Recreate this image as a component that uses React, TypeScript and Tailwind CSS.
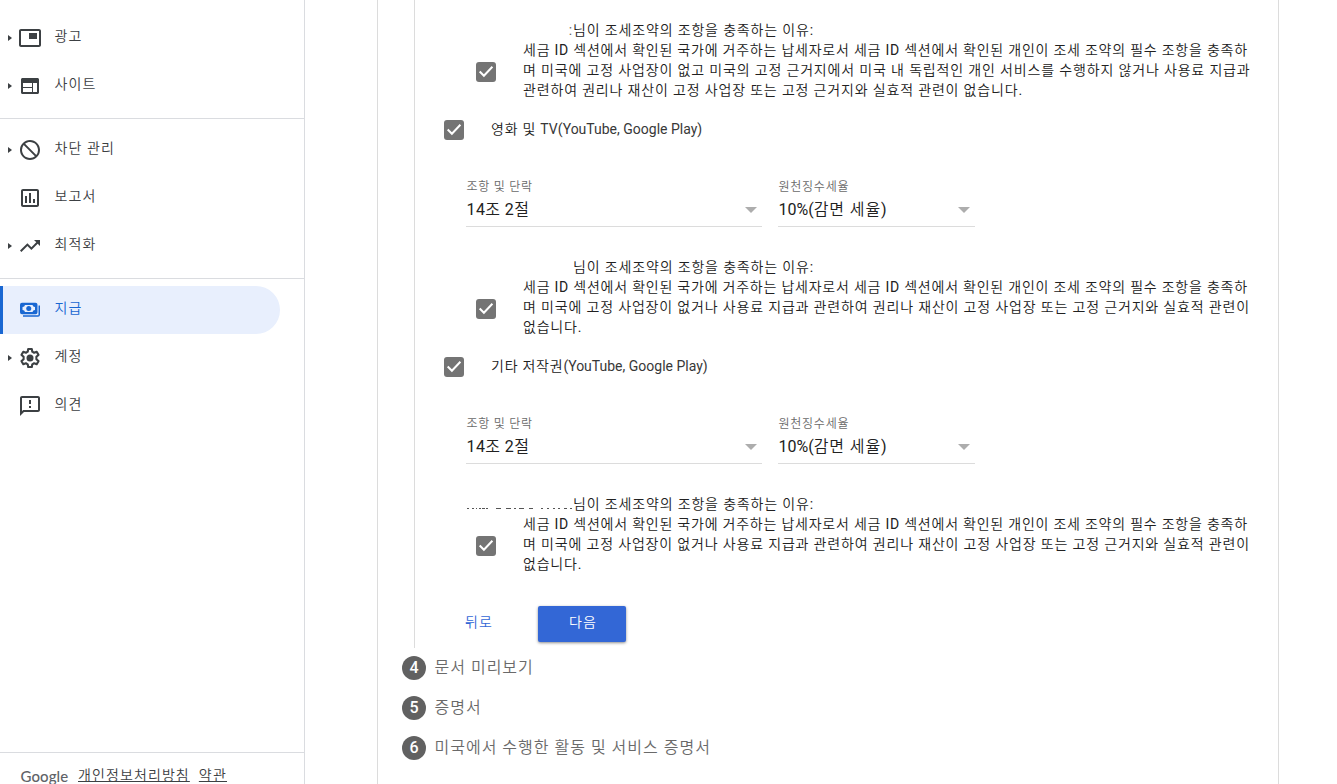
import React from 'react';
import { MdBlock, MdOutlineAssessment, MdTrendingUp, MdOutlineFeedback } from 'react-icons/md';

function AdsIcon() {
  return (
    <svg viewBox="0 0 24 24" width="24" height="24" fill="currentColor">
      <path d="M21 3H3c-1.1 0-2 .9-2 2v14c0 1.1.9 2 2 2h18c1.1 0 2-.9 2-2V5c0-1.1-.9-2-2-2zm0 16H3V5h18v14z" />
      <path d="M11 7h8v6h-8z" />
    </svg>
  );
}

function SiteIcon() {
  return (
    <svg viewBox="0 0 24 24" width="24" height="24" fill="currentColor">
      <path
        fillRule="evenodd"
        d="M4.500 4h15c.8 0 1.500.7 1.500 1.500v13c0 .8-.7 1.500-1.500 1.500h-15c-.8 0-1.500-.7-1.500-1.500v-13C3 4.700 3.700 4 4.500 4zM5 9v4h9V9zM5 14v4h9v-4zM15 9v9h4V9z"
      />
    </svg>
  );
}

function GearIcon() {
  return (
    <svg viewBox="0 0 24 24" width="24" height="24">
      <path
        fill="none"
        stroke="currentColor"
        strokeWidth="2.100"
        strokeLinejoin="round"
        d="M10.200 3h3.600l.5 2.700 1.800 1.050 2.600-.95 1.800 3.100-2.100 1.800v2.600l2.100 1.800-1.800 3.100-2.600-.95-1.800 1.050-.5 2.700h-3.600l-.5-2.700-1.800-1.050-2.600.95-1.800-3.100 2.100-1.800v-2.600l-2.100-1.800 1.800-3.100 2.600.95 1.800-1.050z"
      />
      <circle cx="12" cy="12" r="3.500" fill="currentColor" />
    </svg>
  );
}

function PayIcon() {
  return (
    <svg viewBox="0 0 20 16" width="20" height="16" fill="currentColor">
      <path
        fillRule="evenodd"
        d="M2 .7h13.500a2 2 0 0 1 2 2v7.600a2 2 0 0 1-2 2H2a2 2 0 0 1-2-2V2.700a2 2 0 0 1 2-2zM5 3a2.500 2.500 0 0 1-2.500 2v3A2.500 2.500 0 0 1 5 10h7.500A2.500 2.500 0 0 1 15 8V5a2.500 2.500 0 0 1-2.500-2z"
      />
      <circle cx="8.750" cy="6.500" r="2.500" />
      <path d="M18.500 3.500H20v9.300a2 2 0 0 1-2 2H3v-1.500h15.500z" />
    </svg>
  );
}

type Item = { label: string; icon: React.ReactNode; arrow?: boolean; active?: boolean };

function NavItem({ label, icon, arrow, active }: Item) {
  return (
    <a
      className={
        active
          ? 'flex h-12 w-[280px] items-center rounded-r-full border-l-[3px] border-[#1967d2] bg-[#e8effd] text-[#1967d2]'
          : 'flex h-12 w-[280px] items-center border-l-[3px] border-transparent text-[#3c4043]'
      }
    >
      <span className="flex w-[15px] justify-start pl-[5px]">
        {arrow && (
          <svg viewBox="0 0 4 6" width="4" height="6" fill="currentColor">
            <path d="M0 0l4 3-4 3z" />
          </svg>
        )}
      </span>
      <span className="flex size-6 items-center justify-center">{icon}</span>
      <span className="ml-[12.5px] pb-[5px] text-[14px] leading-5 tracking-[1.1px]">{label}</span>
    </a>
  );
}

function Check() {
  return (
    <span className="flex size-5 shrink-0 items-center justify-center rounded-[3px] bg-[#747474]">
      <svg viewBox="0 0 20 20" width="20" height="20" fill="none" stroke="#fff" strokeWidth="2">
        <path d="M3.700 9.500l4.200 4.300 8.500-9" />
      </svg>
    </span>
  );
}

function Select({ label, value, wide }: { label: string; value: React.ReactNode; wide?: boolean }) {
  return (
    <div className={wide ? 'h-[51px] w-[296px] border-b border-[#dcdcdc] pt-px' : 'h-[51px] w-[197px] border-b border-[#dcdcdc] pt-px'}>
      <div className="h-[20px] pl-[0.5px] text-[12px] leading-5 tracking-[0.75px] text-[#6a6a6a]">{label}</div>
      <div className="flex h-[26px] items-center justify-between pr-[5px] text-[16px] leading-6 text-[#212121]">
        <span className="pl-[0.5px]">{value}</span>
        <svg viewBox="0 0 12 6" width="12" height="6" fill="#adadad">
          <path d="M0 0h12l-6 6z" />
        </svg>
      </div>
    </div>
  );
}

function Reason({ lead, lines }: { lead?: React.ReactNode; lines: { text: string; fit: string }[] }) {
  return (
    <div className="h-20 text-[14px] leading-5 tracking-[0.8px] whitespace-nowrap text-[#212121]">
      <div className="flex h-5 pl-[52px]">
        <span className="flex w-[106px] justify-end">{lead}</span>
        <span className="tracking-[0.84px]">님이 조세조약의 조항을 충족하는 이유:</span>
      </div>
      <div className="flex items-start pl-[61px]">
        <span className="mt-[22px] flex">
          <Check />
        </span>
        <div className="ml-[27px]">
          {lines.map((l) => (
            <div key={l.text} className={l.fit}>
              {l.text}
            </div>
          ))}
        </div>
      </div>
    </div>
  );
}

const FIRST = {
  text: '세금 ID 섹션에서 확인된 국가에 거주하는 납세자로서 세금 ID 섹션에서 확인된 개인이 조세 조약의 필수 조항을 충족하',
  fit: 'tracking-[0.77px]',
};

function Category({ title, latin, lead }: { title: string; latin: string; lead?: React.ReactNode }) {
  return (
    <section className="pt-[17px]">
      <div className="flex h-[26px] items-center pl-[29px]">
        <Check />
        <span className="ml-[27px] pb-[2px] text-[14px] leading-5 text-[#212121]">
          <span className="tracking-[0.75px]">{title}</span>
          <span className="text-[#383838]">{latin}</span>
        </span>
      </div>
      <div className="mt-[33px] flex gap-4 pl-[51px]">
        <Select wide label="조항 및 단락" value={<span className="tracking-[0.4px]">14조 2절</span>} />
        <Select
          label="원천징수세율"
          value={
            <>
              10%(<span className="tracking-[0.9px]">감면 세율</span>)
            </>
          }
        />
      </div>
      <div className="mt-[30px]">
        <Reason
          lead={lead}
          lines={[
            FIRST,
            {
              text: '며 미국에 고정 사업장이 없거나 사용료 지급과 관련하여 권리나 재산이 고정 사업장 또는 고정 근거지와 실효적 관련이',
              fit: 'tracking-[0.83px]',
            },
            { text: '없습니다.', fit: 'tracking-[0.8px]' },
          ]}
        />
      </div>
    </section>
  );
}

function NameResidue() {
  return (
    <svg viewBox="0 0 106 20" width="106" height="20" fill="none" stroke="#555" strokeWidth="1">
      <path
        d="M0 14.500h106"
        strokeDasharray="2 3 2 2 1 2 2 1 3 1 2 8 5 5 5 3 2 3 5 5 4 8 2 4 2 4 2 3 2 4 3 3 2 3 2 9"
      />
    </svg>
  );
}

function Step({ n, label }: { n: number; label: string }) {
  return (
    <div className="flex h-10 items-center">
      <span className="flex size-6 items-center justify-center rounded-full bg-[#616161] text-[16px] font-medium text-white">{n}</span>
      <span className="ml-[8.5px] text-[16px] leading-6 tracking-[1px] text-[#6a6a6a]">{label}</span>
    </div>
  );
}

export default function App() {
  return (
    <div className="flex h-[784px] w-[1337px] overflow-hidden bg-white font-[Roboto,'Noto_Sans_CJK_KR_DemiLight','Noto_Sans_CJK_KR_Light','Noto_Sans_CJK_KR',sans-serif]">
      <aside className="flex w-[305px] flex-col border-r border-[#dadce0]">
        <nav className="pt-[14px]">
          <NavItem arrow label="광고" icon={<AdsIcon />} />
          <NavItem arrow label="사이트" icon={<SiteIcon />} />
          <div className="mt-2 mb-[7px] h-px bg-[#dadce0]" />
          <NavItem arrow label="차단 관리" icon={<MdBlock size={24} className="-scale-x-100" />} />
          <NavItem label="보고서" icon={<MdOutlineAssessment size={24} />} />
          <NavItem arrow label="최적화" icon={<MdTrendingUp size={24} />} />
          <div className="mt-2 mb-[7px] h-px bg-[#dadce0]" />
          <NavItem active label="지급" icon={<PayIcon />} />
          <NavItem arrow label="계정" icon={<GearIcon />} />
          <NavItem label="의견" icon={<MdOutlineFeedback size={24} />} />
        </nav>
        <footer className="mt-auto flex h-8 items-start border-t border-[#dadce0] pt-[12px] pl-5 text-[14px] leading-5 text-[#3c4043]">
          <span className="w-[58px] pt-px pl-[0.5px] font-['Lato'] text-[15px] font-medium tracking-[0.1px] text-[#5f6368]">Google</span>
          <a className="tracking-[1.1px] underline">개인정보처리방침</a>
          <a className="ml-[9px] tracking-[1.2px] underline">약관</a>
        </footer>
      </aside>
      <main className="ml-[72px] w-[902px] border-x border-[#dcdcdc]">
        <div className="ml-9 h-[648px] border-l border-[#dcdcdc] pt-5">
          <Reason
            lead={<span className="text-[#666]">:</span>}
            lines={[
              FIRST,
              {
                text: '며 미국에 고정 사업장이 없고 미국의 고정 근거지에서 미국 내 독립적인 개인 서비스를 수행하지 않거나 사용료 지급과',
                fit: 'tracking-[0.84px]',
              },
              {
                text: '관련하여 권리나 재산이 고정 사업장 또는 고정 근거지와 실효적 관련이 없습니다.',
                fit: 'tracking-[0.83px]',
              },
            ]}
          />
          <Category title="영화 및 " latin="TV(YouTube, Google Play)" />
          <Category title="기타 저작권" latin="(YouTube, Google Play)" lead={<NameResidue />} />
          <div className="mt-8 flex items-center pl-[50px]">
            <button className="w-[73px] pb-[3px] text-left text-[14px] tracking-[1px] text-[#3367d6]">뒤로</button>
            <button className="h-9 w-[88px] rounded-[2px] bg-[#3367d6] pb-[3px] pl-[2px] text-[14px] tracking-[1px] text-white shadow-[0_1px_3px_rgba(0,0,0,0.45)]">
              다음
            </button>
          </div>
        </div>
        <div className="pl-6">
          <Step n={4} label="문서 미리보기" />
          <Step n={5} label="증명서" />
          <Step n={6} label="미국에서 수행한 활동 및 서비스 증명서" />
        </div>
      </main>
    </div>
  );
}
